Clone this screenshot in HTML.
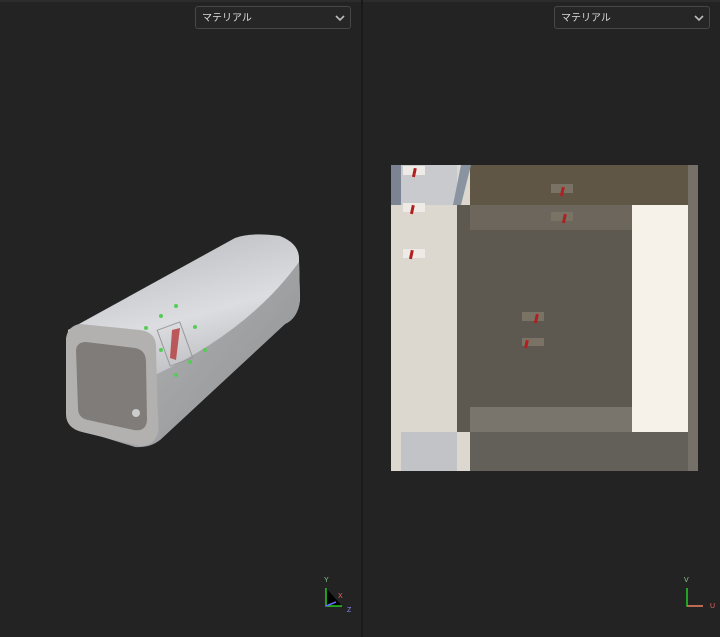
<!DOCTYPE html><html><head><meta charset="utf-8"><style>
body{margin:0;width:720px;height:637px;background:#232323;position:relative;overflow:hidden;font-family:"Liberation Sans","Noto Sans CJK JP",sans-serif}
.a{position:absolute}
.dd{position:absolute;top:6px;height:23px;width:156px;border:1px solid #474747;border-radius:3px;background:#262626;color:#ddd;font-size:10px;line-height:23px;box-sizing:border-box;padding-left:6px}
.dd svg{position:absolute;right:5px;top:7px}
</style></head><body>
<div class="a" style="left:0;top:0;width:720px;height:2px;background:#2c2c2c"></div>
<div class="a" style="left:361px;top:0;width:2px;height:637px;background:#1a1a1a"></div>
<div class="dd" style="left:195px">マテリアル<svg width="10" height="8"><path d="M1 2l4 4 4-4" stroke="#bbb" stroke-width="1.6" fill="none"/></svg></div>
<div class="dd" style="left:554px">マテリアル<svg width="10" height="8"><path d="M1 2l4 4 4-4" stroke="#bbb" stroke-width="1.6" fill="none"/></svg></div>

<svg class="a" style="left:0;top:0" width="360" height="637">
<defs><linearGradient id="g" x1="0" y1="0" x2="0.3" y2="1"><stop offset="0" stop-color="#b4b5b9"/><stop offset="0.5" stop-color="#dcdde0"/><stop offset="1" stop-color="#a0a1a5"/></linearGradient>
<linearGradient id="s" x1="0" y1="0" x2="1" y2="1"><stop offset="0" stop-color="#b0b1b3"/><stop offset="1" stop-color="#909193"/></linearGradient></defs>
<path d="M68 330 L235 238 Q250 232 280 236 Q300 244 299 260 L300 300 Q298 318 285 324 L160 440 Q150 448 135 447 L80 430 Q66 424 66 410 Z" fill="url(#g)"/>
<path d="M160 440 L285 324 Q298 318 300 300 L299 262 Q250 330 155 375 Z" fill="url(#s)"/>
<path d="M66 338 Q68 326 80 324 L140 330 Q155 332 156 345 L158 430 Q156 446 140 446 L82 432 Q66 428 66 414 Z" fill="#b2b1b0"/>
<path d="M76 350 Q77 342 86 342 L135 348 Q146 350 146 362 L147 420 Q146 432 134 430 L88 420 Q78 418 78 408 Z" fill="#7f7c79"/>
<circle cx="136" cy="413" r="4" fill="#ccc"/>
<rect x="163" y="325" width="24" height="38" fill="none" stroke="#999" transform="rotate(-20 175 344)"/>
<path d="M172 330 L180 328 L176 360 L170 358Z" fill="#b43a3a" opacity="0.8"/>
<g fill="#5c5" ><circle cx="146" cy="328" r="2"/><circle cx="161" cy="316" r="2"/><circle cx="176" cy="306" r="2"/><circle cx="195" cy="327" r="2"/><circle cx="205" cy="350" r="2"/><circle cx="190" cy="362" r="2"/><circle cx="176" cy="375" r="2"/><circle cx="161" cy="350" r="2"/></g>
<g stroke="#2c2" stroke-width="1.5"><path d="M326 588v18h16"/></g>
<path d="M326 606l10 -4" stroke="#66f" stroke-width="1.5"/>
<text x="324" y="582" fill="#8c8" font-size="7">Y</text><text x="338" y="598" fill="#e66" font-size="7">X</text><text x="347" y="612" fill="#88f" font-size="7">Z</text>
</svg>

<div class="a" style="left:391px;top:165px;width:307px;height:306px;background:#dcd8d0"></div>
<div class="a" style="left:391px;top:165px;width:10px;height:40px;background:#7c8494"></div>
<div class="a" style="left:401px;top:165px;width:56px;height:40px;background:#c9cacd"></div>
<div class="a" style="left:470px;top:165px;width:218px;height:40px;background:#5f5646"></div>
<div class="a" style="left:688px;top:165px;width:10px;height:306px;background:#757068"></div>
<div class="a" style="left:457px;top:205px;width:175px;height:227px;background:#5e5950"></div>
<div class="a" style="left:470px;top:205px;width:162px;height:25px;background:#6c665c"></div>
<div class="a" style="left:470px;top:407px;width:162px;height:25px;background:#7a756c"></div>
<div class="a" style="left:632px;top:205px;width:56px;height:227px;background:#f6f2e9"></div>
<div class="a" style="left:470px;top:432px;width:218px;height:39px;background:#626058"></div>
<div class="a" style="left:401px;top:432px;width:56px;height:39px;background:#c2c3c7"></div>
<div class="a" style="left:457px;top:432px;width:13px;height:39px;background:#dcd8d0"></div>
<svg class="a" style="left:391px;top:165px" width="307" height="306">
<path d="M70 0 L80 0 L70 40 L62 40Z" fill="#8a93a0"/>
<g fill="#eeebe6"><rect x="12" y="1" width="22" height="9"/><rect x="12" y="38" width="22" height="9"/><rect x="12" y="84" width="22" height="9"/></g>
<g fill="#7a7264"><rect x="160" y="19" width="22" height="9"/><rect x="160" y="47" width="22" height="9"/><rect x="131" y="147" width="22" height="9"/><rect x="131" y="173" width="22" height="8"/></g>
<g fill="#b02020"><rect x="22" y="3" width="3" height="9" transform="rotate(12 23 7)"/><rect x="20" y="40" width="3" height="9" transform="rotate(12 21 44)"/><rect x="19" y="85" width="3" height="9" transform="rotate(12 20 89)"/><rect x="170" y="22" width="3" height="9" transform="rotate(12 171 26)"/><rect x="172" y="49" width="3" height="9" transform="rotate(12 173 53)"/><rect x="144" y="149" width="3" height="9" transform="rotate(12 145 153)"/><rect x="134" y="175" width="3" height="8" transform="rotate(12 135 179)"/></g>
</svg>

<svg class="a" style="left:680px;top:570px" width="40" height="40">
<path d="M7 18v18h16" stroke="#2c2" stroke-width="1.5" fill="none"/><path d="M7 36h16" stroke="#e66" stroke-width="1.5"/>
<text x="4" y="12" fill="#8c8" font-size="7">V</text><text x="30" y="38" fill="#e66" font-size="7">U</text>
</svg>
</body></html>
